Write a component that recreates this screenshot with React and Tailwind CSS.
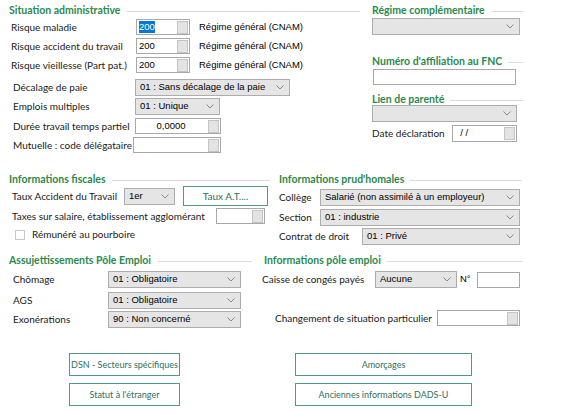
import React from 'react';

const labelFont = { fontFamily: 'Lato, "Open Sans", sans-serif' };
const valueFont = { fontFamily: '"Liberation Sans", Arial, sans-serif' };

function Title({ children, className = '' }) {
  return (
    <div className={`flex items-center h-[14px] ${className}`}>
      <span className="text-[10.5px] font-bold text-[#2a8a4c] mr-[6px] whitespace-nowrap" style={labelFont}>
        {children}
      </span>
      <div className="flex-1 h-px bg-[#dcdcdc]"></div>
    </div>
  );
}

function Chevron() {
  return (
    <svg width="8" height="5" viewBox="0 0 8 5" className="shrink-0">
      <polyline points="0.5,0.5 4,4 7.5,0.5" fill="none" stroke="#8a8a8a" strokeWidth="1" />
    </svg>
  );
}

function Select({ value = '', className = '' }) {
  return (
    <div
      className={`flex items-center justify-between h-[17px] bg-[#e5e5e5] border border-[#adadad] pl-[4px] pr-[5px] text-[9.5px] text-black ${className}`}
      style={valueFont}
    >
      <span className="whitespace-nowrap">{value}</span>
      <Chevron />
    </div>
  );
}

function Ellipsis() {
  return (
    <div className="w-[14px] h-full flex items-center justify-center bg-white">
      <div className="w-[11px] h-[13px] bg-[#e3e3e3] border border-[#c4c4c4]"></div>
    </div>
  );
}

function Field({ value = '', className = '', button = false, center = false, selected = false }) {
  return (
    <div className={`flex h-[16px] ${className}`}>
      <div
        className={`flex-1 flex items-center border border-[#a8a8a8] bg-white text-[9.5px] px-[2px] whitespace-pre ${center ? 'justify-center' : ''}`}
        style={valueFont}
      >
        {selected ? <span className="bg-[#0078d7] text-white leading-[12px]">{value}</span> : value}
      </div>
      {button && (
        <div className="-ml-px border border-[#a8a8a8] border-l-0 h-full">
          <Ellipsis />
        </div>
      )}
    </div>
  );
}

function Label({ children, className = '' }) {
  return (
    <span className={`text-[10px] text-[#1a1a1a] whitespace-nowrap shrink-0 ${className}`} style={labelFont}>
      {children}
    </span>
  );
}

function GreenButton({ children, className = '' }) {
  return (
    <div
      className={`flex items-center justify-center border border-[#4f9a80] bg-white text-[#2f6f60] whitespace-nowrap ${className}`}
      style={labelFont}
    >
      {children}
    </div>
  );
}

function Regime() {
  return (
    <span className="ml-[9px] text-[9.5px] whitespace-nowrap" style={valueFont}>
      Régime général (CNAM)
    </span>
  );
}

export default function App() {
  return (
    <div className="w-[576px] h-[411px] bg-white relative overflow-hidden">
      {/* Haut */}
      <div className="flex pt-[4px]">
        <div className="w-[351px] ml-[9px]">
          <Title>Situation administrative</Title>
          <div className="mt-[1px] flex items-center h-[16px]">
            <Label className="w-[127px] pl-[2px]">Risque maladie</Label>
            <Field value="200" button selected className="w-[54px]" />
            <Regime />
          </div>
          <div className="mt-[3px] flex items-center h-[16px]">
            <Label className="w-[127px] pl-[2px]">Risque accident du travail</Label>
            <Field value="200" button className="w-[54px]" />
            <Regime />
          </div>
          <div className="mt-[3px] flex items-center h-[16px]">
            <Label className="w-[127px] pl-[2px]">Risque vieillesse (Part pat.)</Label>
            <Field value="200" button className="w-[54px]" />
            <Regime />
          </div>
          <div className="mt-[6px] flex items-center">
            <Label className="w-[126px] pl-[4px]">Décalage de paie</Label>
            <Select value="01 : Sans décalage de la paie" className="w-[155px]" />
          </div>
          <div className="mt-[2px] flex items-center">
            <Label className="w-[126px] pl-[4px]">Emplois multiples</Label>
            <Select value="01 : Unique" className="w-[85px]" />
          </div>
          <div className="mt-[3px] flex items-center">
            <Label className="w-[126px] pl-[4px]">Durée travail temps partiel</Label>
            <Field value="0,0000" button center className="w-[86px]" />
          </div>
          <div className="mt-[3px] flex items-center">
            <Label className="w-[124px] pl-[4px]">Mutuelle : code délégataire</Label>
            <Field button className="w-[88px]" />
          </div>
        </div>
        <div className="w-[151px] ml-[12px]">
          <Title>Régime complémentaire</Title>
          <Select className="w-[148px]" />
          <Title className="mt-[20px]">Numéro d'affiliation au FNC</Title>
          <Field className="w-[143px] ml-px" />
          <Title className="mt-[8px]">Lien de parenté</Title>
          <Select className="w-[145px] -mt-[2px]" />
          <div className="mt-[3px] flex items-center">
            <Label className="w-[80px]">Date déclaration</Label>
            <Field value="  / /" button className="w-[65px] h-[17px]" />
          </div>
        </div>
      </div>

      {/* Milieu */}
      <div className="flex mt-[20px]">
        <div className="w-[261px] ml-[9px]">
          <Title>Informations fiscales</Title>
          <div className="flex items-center mt-[-1px] h-[20px]">
            <Label className="w-[115px] pl-[3px]">Taux Accident du Travail</Label>
            <Select value="1er" className="w-[51px]" />
            <GreenButton className="ml-[8px] w-[85px] h-[20px] text-[10px]">Taux A.T....</GreenButton>
          </div>
          <div className="flex items-center mt-[2px]">
            <Label className="w-[207px] pl-[3px]">Taxes sur salaire, établissement agglomérant</Label>
            <Field button className="w-[49px]" />
          </div>
          <div className="flex items-center mt-[3px] pl-[6px]">
            <div className="w-[10px] h-[10px] border border-[#c8c8c8] bg-white"></div>
            <Label className="ml-[7px]">Rémunéré au pourboire</Label>
          </div>
        </div>
        <div className="w-[243px] ml-[9px]">
          <Title>Informations prud'homales</Title>
          <div className="flex items-center mt-[2px]">
            <Label className="w-[41px]">Collège</Label>
            <Select value="Salarié (non assimilé à un employeur)" className="w-[200px]" />
          </div>
          <div className="flex items-center mt-[3px]">
            <Label className="w-[41px]">Section</Label>
            <Select value="01 : industrie" className="w-[200px]" />
          </div>
          <div className="flex items-center mt-[2px]">
            <Label className="w-[83px]">Contrat de droit</Label>
            <Select value="01 : Privé" className="w-[158px]" />
          </div>
        </div>
      </div>

      {/* Pôle emploi */}
      <div className="flex mt-[9px]">
        <div className="w-[243px] ml-[9px]">
          <Title>Assujettissements Pôle Emploi</Title>
          <div className="flex items-center mt-[3px]">
            <Label className="w-[99px] pl-[4px]">Chômage</Label>
            <Select value="01 : Obligatoire" className="w-[133px]" />
          </div>
          <div className="flex items-center mt-[4px]">
            <Label className="w-[99px] pl-[4px]">AGS</Label>
            <Select value="01 : Obligatoire" className="w-[133px]" />
          </div>
          <div className="flex items-center mt-[2px]">
            <Label className="w-[99px] pl-[4px]">Exonérations</Label>
            <Select value="90 : Non concerné" className="w-[133px]" />
          </div>
        </div>
        <div className="w-[261px] ml-[10px]">
          <div className="pl-[2px]">
            <Title>Informations pôle emploi</Title>
          </div>
          <div className="flex items-center mt-[3px]">
            <Label className="w-[113px]">Caisse de congés payés</Label>
            <Select value="Aucune" className="w-[82px]" />
            <span className="ml-[3px] w-[17px] text-[9.5px]" style={valueFont}>N°</span>
            <Field className="w-[43px]" />
          </div>
          <div className="flex items-center mt-[22px] pl-[13px]">
            <Label className="w-[162px]">Changement de situation particulier</Label>
            <Field button className="w-[83px]" />
          </div>
        </div>
      </div>

      {/* Boutons */}
      <div className="flex mt-[25px]">
        <div className="ml-[69px] flex flex-col gap-[7px]">
          <GreenButton className="w-[111px] h-[23px] text-[9px]">DSN - Secteurs spécifiques</GreenButton>
          <GreenButton className="w-[111px] h-[23px] text-[9px]">Statut à l'étranger</GreenButton>
        </div>
        <div className="ml-[115px] flex flex-col gap-[7px]">
          <GreenButton className="w-[177px] h-[23px] text-[9px]">Amorçages</GreenButton>
          <GreenButton className="w-[177px] h-[23px] text-[9px]">Anciennes informations DADS-U</GreenButton>
        </div>
      </div>
    </div>
  );
}
